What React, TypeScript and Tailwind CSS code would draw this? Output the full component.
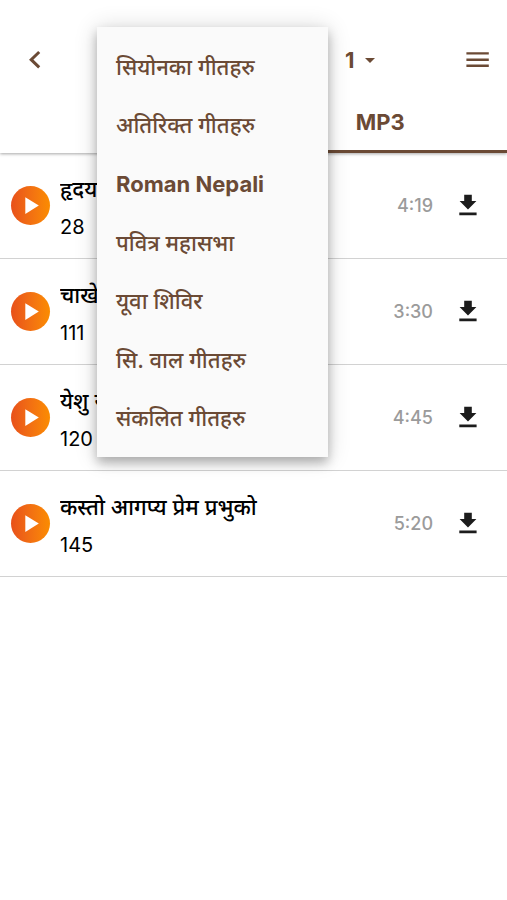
type Song = { title: string; number: number; length: string };

const songs: Song[] = [
  { title: "हृदय", number: 28, length: "4:19" },
  { title: "चाखे", number: 111, length: "3:30" },
  { title: "येशु र", number: 120, length: "4:45" },
  { title: "कस्तो आगप्य प्रेम प्रभुको", number: 145, length: "5:20" },
];

const books = [
  { name: "सियोनका गीतहरु", weight: "font-medium" },
  { name: "अतिरिक्त गीतहरु", weight: "font-medium" },
  { name: "Roman Nepali", weight: "font-bold" },
  { name: "पवित्र महासभा", weight: "font-medium" },
  { name: "यूवा शिविर", weight: "font-medium" },
  { name: "सि. वाल गीतहरु", weight: "font-medium" },
  { name: "संकलित गीतहरु", weight: "font-medium" },
];

function Header() {
  return (
    <header className="relative bg-white text-[#6b4a35] shadow-[0_1px_3px_rgba(0,0,0,0.35)]">
      <div className="flex h-[90px] items-center pt-[30px] pr-[18px] pl-[22px]">
        <button type="button" aria-label="Back" className="flex size-6 items-center justify-center">
          <svg viewBox="0 0 24 24" className="size-6" fill="none" stroke="currentColor" strokeWidth="3">
            <path d="M17.2 4 9.2 11.7l8 7.7" />
          </svg>
        </button>
        <div className="ml-auto grid w-[30px] items-center">
          <select aria-label="Volume" className="col-start-1 row-start-1 h-9 w-[30px] appearance-none bg-transparent text-[22px] leading-[36px] font-bold">
            <option>1</option>
          </select>
          <svg viewBox="0 0 10 5" className="pointer-events-none col-start-1 row-start-1 h-[5px] w-[10px] justify-self-end" fill="currentColor">
            <path d="M0 0h10L5 5z" />
          </svg>
        </div>
        <button type="button" aria-label="Menu" className="ml-[90px] flex size-6 items-center justify-center">
          <svg viewBox="0 0 24 24" className="size-6" fill="none" stroke="currentColor" strokeWidth="2.4">
            <path d="M1.4 5.4h22.4M1.4 11.7h22.4M1.4 17.8h22.4" />
          </svg>
        </button>
      </div>
      <div role="tablist" className="grid grid-cols-2">
        <button type="button" role="tab" aria-selected="false" aria-label="Songs" className="h-[63px]" />
        <button type="button" role="tab" aria-selected="true" className="h-[63px] border-b-3 border-[#6b4a35] pt-1 text-[22px] font-bold">
          MP3
        </button>
      </div>
    </header>
  );
}

function SongRow({ title, number, length }: Song) {
  return (
    <li className="flex h-[106px] items-center border-b border-[#d2d2d2] pr-[24px] pl-[11px]">
      <button type="button" aria-label={`Play ${number}`} className="flex size-[39px] shrink-0 items-center justify-center rounded-full bg-linear-to-r from-[#e8501a] to-[#fb8c00]">
        <svg viewBox="0 0 39 39" className="size-[39px]" fill="white">
          <path d="M14.3 11.2v16.8L27.8 19.4z" />
        </svg>
      </button>
      <div className="ml-[10px] flex min-w-0 flex-1 flex-col pt-[5px] text-black">
        <span className="truncate text-[22px] leading-[38px] font-medium">{title}</span>
        <span className="text-[20px] leading-[38px]">{number}</span>
      </div>
      <span className="text-[18px] font-medium text-[#9b9b9b]">{length}</span>
      <button type="button" aria-label={`Download ${number}`} className="ml-[20px] size-[30px]">
        <svg viewBox="0 0 30 30" className="size-[30px]" fill="#1c1c1c">
          <path d="M11.2 3.7h7.6v6.2h4.6L15 18.6l-8.4-8.7h4.6zM6.3 21.6h17.3v2.6H6.3z" />
        </svg>
      </button>
    </li>
  );
}

export default function App() {
  return (
    <div className="relative min-h-screen bg-white font-['Inter','Noto_Sans',sans-serif]">
      <Header />
      <ul>
        {songs.map((song) => (
          <SongRow key={song.number} {...song} />
        ))}
      </ul>
      <div role="menu" className="absolute top-[27px] left-[97px] flex h-[430px] w-[231px] flex-col bg-[#fafafa] pt-[11px] pb-[9px] text-[#6b4a35] shadow-[0_6px_10px_rgba(0,0,0,0.26),0_1px_22px_rgba(0,0,0,0.16)]">
        {books.map((book) => (
          <button key={book.name} type="button" role="menuitem" className={`flex-1 px-[19px] text-left text-[22px] ${book.weight}`}>
            {book.name}
          </button>
        ))}
      </div>
    </div>
  );
}
